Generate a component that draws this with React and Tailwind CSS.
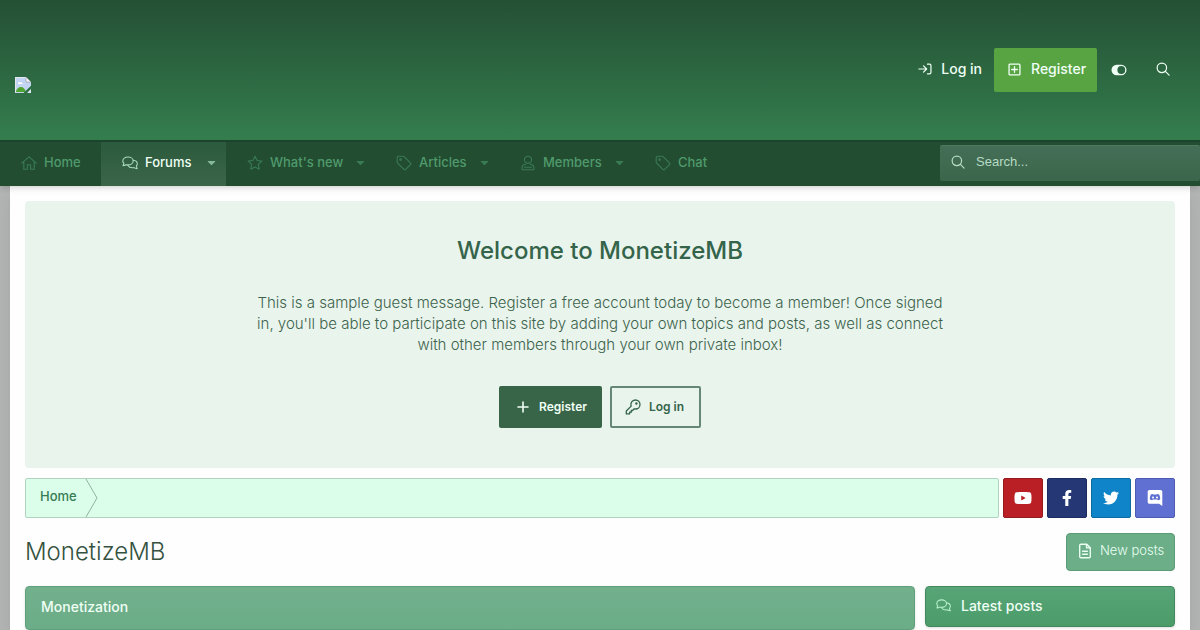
import clsx from 'clsx';
import { FaYoutube, FaFacebookF, FaTwitter, FaCaretDown } from 'react-icons/fa';

const Icon = ({ children, size = 16, width = 1.1, className }) => (
    <svg
        width={size}
        height={size}
        viewBox="0 0 16 16"
        fill="none"
        stroke="currentColor"
        strokeWidth={width}
        strokeLinecap="round"
        strokeLinejoin="round"
        className={clsx('shrink-0', className)}
        aria-hidden="true"
    >
        {children}
    </svg>
);

const HomeIcon = (props) => (
    <Icon {...props}>
        <path d="M.8 8.200 8 1.800l7.200 6.400M2.800 6.600v7.600h3.600V9.800h3.200v4.400h3.600V6.600" />
    </Icon>
);

const CommentsIcon = (props) => (
    <Icon {...props}>
        <path d="M6 2C3.100 2 .8 3.700 .8 5.900c0 1 .4 1.800 1.100 2.500L1 10.600c1.300 0 2.300-.4 3-.9.6.2 1.300.2 2 .2 2.900 0 5.200-1.700 5.200-4S8.900 2 6 2z" />
        <path d="M11.300 5.200c2.300.3 4 1.700 4 3.600 0 .9-.4 1.700-1 2.300l.9 2.500c-1.300 0-2.300-.4-3-1-.6.2-1.200.2-1.800.2-2 0-3.700-.9-4.500-2.300" />
    </Icon>
);

const StarIcon = (props) => (
    <Icon {...props}>
        <path d="m8 1.200 2.050 4.300 4.750.65-3.450 3.300.85 4.700L8 11.900l-4.200 2.250.85-4.700L1.200 6.150l4.750-.65z" />
    </Icon>
);

const TagIcon = (props) => (
    <Icon {...props}>
        <path d="M1.200 2.600v4.500c0 .4.200.7.400 1l6.300 6.300c.5.500 1.300.5 1.800 0l4.700-4.700c.5-.5.5-1.300 0-1.800L8.100 1.600c-.3-.3-.6-.4-1-.4H2.600c-.8 0-1.400.6-1.400 1.400z" />
        <circle cx="4.600" cy="4.600" r=".8" />
    </Icon>
);

const UserIcon = (props) => (
    <Icon {...props}>
        <circle cx="8" cy="4.800" r="3.600" />
        <path d="M5.600 9.300c-1.900.3-3.500 1.700-3.500 3.700v1c0 .4.300.8.800.8h10.200c.5 0 .8-.4.800-.8v-1c0-2-1.600-3.400-3.500-3.700M4.600 12.200h6.800" />
    </Icon>
);

const SearchIcon = (props) => (
    <Icon {...props}>
        <circle cx="6.700" cy="6.700" r="5.400" />
        <path d="m10.700 10.700 4.300 4.300" />
    </Icon>
);

const LoginIcon = (props) => (
    <Icon {...props}>
        <path d="M1 8h8.500M6.300 4.400 9.900 8l-3.600 3.600M10.800 2.500h2.400c.9 0 1.600.7 1.600 1.600v7.800c0 .9-.7 1.600-1.600 1.600h-2.400" />
    </Icon>
);

const SquarePlusIcon = (props) => (
    <Icon {...props}>
        <rect x="2.200" y="2.200" width="11.600" height="11.600" rx="1" />
        <path d="M8 5v6M5 8h6" />
    </Icon>
);

const PlusIcon = (props) => (
    <Icon {...props}>
        <path d="M8 3v10M3 8h10" />
    </Icon>
);

const KeyIcon = (props) => (
    <Icon {...props}>
        <path d="M10.500 1C7.900 1 5.900 3 5.900 5.500c0 .6.100 1.100.3 1.600L1.300 12v2.900h3.300v-1.700h1.700v-1.700h1.300l1.400-1.700c.5.200 1 .2 1.500.2C13 10 15 8 15 5.500S13 1 10.500 1z" />
        <circle cx="11.400" cy="4.600" r=".6" />
    </Icon>
);

const FileIcon = (props) => (
    <Icon {...props}>
        <path d="M9.800 1.200H3.900c-.7 0-1.200.5-1.200 1.200v11.200c0 .7.500 1.200 1.200 1.200h8.200c.7 0 1.200-.5 1.200-1.200V4.700zM9.500 1.400v3.500h3.600M5.600 8.200h4.800M5.600 11.200h4.800" />
    </Icon>
);

const ToggleIcon = () => (
    <svg width="16" height="12" viewBox="0 0 16 12" aria-hidden="true">
        <rect x=".5" y=".8" width="15" height="10.400" rx="5.200" fill="currentColor" />
        <circle cx="10.300" cy="6" r="3.900" fill="#2a6440" />
    </svg>
);

const DiscordIcon = () => (
    <svg width="16" height="18" viewBox="0 0 16 18" aria-hidden="true">
        <path fill="#fff" d="M2.500 1h11c1 0 1.800.8 1.800 1.800V17l-3.200-2.300H2.500c-1 0-1.800-.8-1.800-1.800V2.800C.7 1.800 1.500 1 2.500 1z" />
        <path fill="#6070d2" d="M5.800 5c-.9.100-1.700.4-2.100.8-.7 1.500-1 3-.9 4.500.7.700 1.500 1 2.400 1l.6-.8h4.400l.6.8c.9 0 1.700-.3 2.400-1 .1-1.500-.2-3-.9-4.500-.4-.4-1.200-.7-2.100-.8l-.4.600H6.200z" />
        <circle cx="6" cy="8.400" r="1" fill="#fff" />
        <circle cx="10" cy="8.400" r="1" fill="#fff" />
    </svg>
);

// Icono de imagen que no se pudo cargar
const BrokenImage = () => (
    <svg width="16" height="16" viewBox="0 0 16 16" role="img" aria-label="MonetizeMB">
        <path d="M0 0h11l5 5v4l-7 7H0z" fill="#c3d5f3" />
        <path d="M.5 15.500V.5H11" fill="none" stroke="#e4e9ee" />
        <path d="M11 0v5h5z" fill="#f5f7fa" stroke="#8d9399" strokeWidth=".6" />
        <path d="M3 6.500c0-1.500 2-2 2.700-.8 1-.5 2 .2 1.800 1.200H3z" fill="#fff" />
        <path d="M1 15c0-3 3-5 5-5 2.500 0 4 2 5 5z" fill="#4fa52f" />
        <path d="m8.500 16 7.500-7v2.500L11.500 16z" fill="#2f7149" />
        <path d="M16 12v4h-4z" fill="#dfe8f4" />
    </svg>
);

const navItems = [
    { label: 'Home', icon: HomeIcon, width: 'w-[101px]' },
    { label: 'Forums', icon: CommentsIcon, width: 'w-[125px]', menu: true, active: true },
    { label: "What's new", icon: StarIcon, width: 'w-[149px]', menu: true },
    { label: 'Articles', icon: TagIcon, width: 'w-[124px]', menu: true },
    { label: 'Members', icon: UserIcon, width: 'w-[135px]', menu: true },
    { label: 'Chat', icon: TagIcon, width: 'w-[94px]' },
];

const socials = [
    { label: 'YouTube', icon: <FaYoutube size={18} />, color: 'bg-[#b91f25] border-[#971a1f]' },
    { label: 'Facebook', icon: <FaFacebookF size={16} />, color: 'bg-[#253775] border-[#1c2b60]' },
    { label: 'Twitter', icon: <FaTwitter size={16} />, color: 'bg-[#0f84c8] border-[#0c6ba3]' },
    { label: 'Discord', icon: <DiscordIcon />, color: 'bg-[#6070d2] border-[#4d5bb0]' },
];

const Header = () => (
    <header className="flex h-[140px] items-center justify-between bg-linear-to-b from-[#245034] to-[#347e4e] px-[15px]">
        <a href="#" className="pt-[30px]">
            <BrokenImage />
        </a>
        <div className="flex h-11 items-center text-sm font-medium text-[#effff5]">
            <a href="#" className="flex h-11 items-center gap-[9px] px-3 pb-0.5">
                <LoginIcon size={14} width={1.4} />
                Log in
            </a>
            <a href="#" className="flex h-11 w-[103px] items-center gap-[9px] rounded-xs bg-[#58a443] px-[13px] pb-0.5">
                <SquarePlusIcon size={15} width={1.4} />
                Register
            </a>
            <button type="button" aria-label="Style variation" className="flex h-11 w-11 items-center justify-center">
                <ToggleIcon />
            </button>
            <button type="button" aria-label="Search" className="flex h-11 w-11 items-center justify-center pb-0.5">
                <SearchIcon size={14} width={1.4} />
            </button>
        </div>
    </header>
);

const Nav = () => (
    <nav className="relative flex h-[46px] justify-between border-t-2 border-[#1c432b] bg-[#234d31] shadow-md">
        <div className="flex">
            {navItems.map(({ label, icon: NavIcon, width, menu, active }) => (
                <a
                    key={label}
                    href="#"
                    className={clsx(
                        'flex items-center pr-2 pb-0.5 pl-[21px] text-[13px] font-medium',
                        width,
                        active
                            ? 'bg-linear-to-b from-[#2b5a3c] to-[#3b6549] text-[#effff5]'
                            : 'text-[#4f9a6c]'
                    )}
                >
                    <NavIcon
                        className={clsx('mr-[7px]', active ? 'text-[#a8dcbc]' : 'text-[#397b53]')}
                    />
                    <span className="whitespace-nowrap">{label}</span>
                    {menu && (
                        <FaCaretDown
                            size={13}
                            className={clsx('mb-0.5 ml-auto', active ? 'text-[#84b998]' : 'text-[#397b53]')}
                        />
                    )}
                </a>
            ))}
        </div>
        <label className="mt-[3px] flex h-9 w-[260px] items-center gap-[11px] rounded-xs border-t border-[#4d7960] bg-linear-to-b from-[#446f57] to-[#3c664b] pb-[3px] pl-[11px] text-[#b7dbc4]">
            <SearchIcon size={14} width={1.4} />
            <input
                type="text"
                aria-label="Search"
                placeholder="Search..."
                className="w-full bg-transparent font-['Liberation_Sans',sans-serif] text-[13px] outline-none placeholder:text-[#b7dbc4]"
            />
        </label>
    </nav>
);

const Welcome = () => (
    <section className="flex flex-col items-center rounded-sm bg-[#e9f4ed] pt-8 pb-10 text-center text-[#3c634b]">
        <h2 className="text-2xl leading-9 font-medium text-[#34644a]">Welcome to MonetizeMB</h2>
        <p className="mt-[23px] max-w-[700px] text-[15px] leading-[21px] font-light">
            This is a sample guest message. Register a free account today to become a member! Once
            signed in, you'll be able to participate on this site by adding your own topics and
            posts, as well as connect with other members through your own private inbox!
        </p>
        <div className="mt-[31px] flex gap-2 text-xs font-semibold">
            <a href="#" className="flex h-[42px] w-[103px] items-center gap-2 rounded-xs bg-[#386447] pl-4 text-[#effff5]">
                <PlusIcon width={1.6} />
                Register
            </a>
            <a href="#" className="flex h-[42px] w-[91px] items-center gap-2 rounded-xs border-2 border-[#668776] pl-[13px] text-[#34644a]">
                <KeyIcon width={1.3} />
                Log in
            </a>
        </div>
    </section>
);

const Breadcrumb = () => (
    <div className="mt-[10px] flex gap-1">
        <div className="flex h-10 grow rounded-xs border border-[#b0d3bf] bg-[#dafeea]">
            <a href="#" className="flex items-center pb-0.5 pl-[14px] text-[13px] font-medium text-[#367c54]">
                Home
            </a>
            <svg width="13" height="38" viewBox="0 0 13 38" fill="none" className="ml-2" aria-hidden="true">
                <path d="M1 0l11 19L1 38" stroke="#8fb39e" />
            </svg>
        </div>
        {socials.map(({ label, icon, color }) => (
            <a
                key={label}
                href="#"
                aria-label={label}
                className={clsx('flex h-10 w-10 items-center justify-center rounded-xs border text-white', color)}
            >
                {icon}
            </a>
        ))}
    </div>
);

const App = () => (
    <div className="overflow-hidden bg-[#b2b4b3] font-['Inter',sans-serif]">
        <Header />
        <Nav />
        <main className="mx-[10px] bg-[#fefefe] px-[15px] pt-[15px] shadow-lg">
            <Welcome />
            <Breadcrumb />
            <div className="mt-[15px] flex items-center justify-between">
                <h1 className="text-2xl font-light text-[#34523f]">MonetizeMB</h1>
                <a href="#" className="flex h-[38px] w-[109px] items-center gap-[7px] rounded-sm border border-[#5b9b77] bg-[#6bae88] pb-0.5 pl-[10px] text-[13px] font-light text-[#e8fff1]">
                    <FileIcon width={1.4} />
                    New posts
                </a>
            </div>
            <div className="mt-[15px] flex items-start gap-[10px] font-medium text-[#effff5]">
                <h2 className="flex h-11 grow items-center rounded-sm border border-[#5f9f7b] bg-linear-to-b from-[#73b08d] to-[#6aad86] px-[15px] pb-0.5 text-sm shadow-sm">
                    Monetization
                </h2>
                <h2 className="flex h-[41px] w-[250px] items-center gap-[10px] rounded-sm border border-[#43895f] bg-linear-to-b from-[#58a577] to-[#4b9b69] px-[10px] pb-0.5 text-sm shadow-sm">
                    <CommentsIcon size={15} className="text-[#b7f0ce]" />
                    Latest posts
                </h2>
            </div>
        </main>
    </div>
);

export default App;
